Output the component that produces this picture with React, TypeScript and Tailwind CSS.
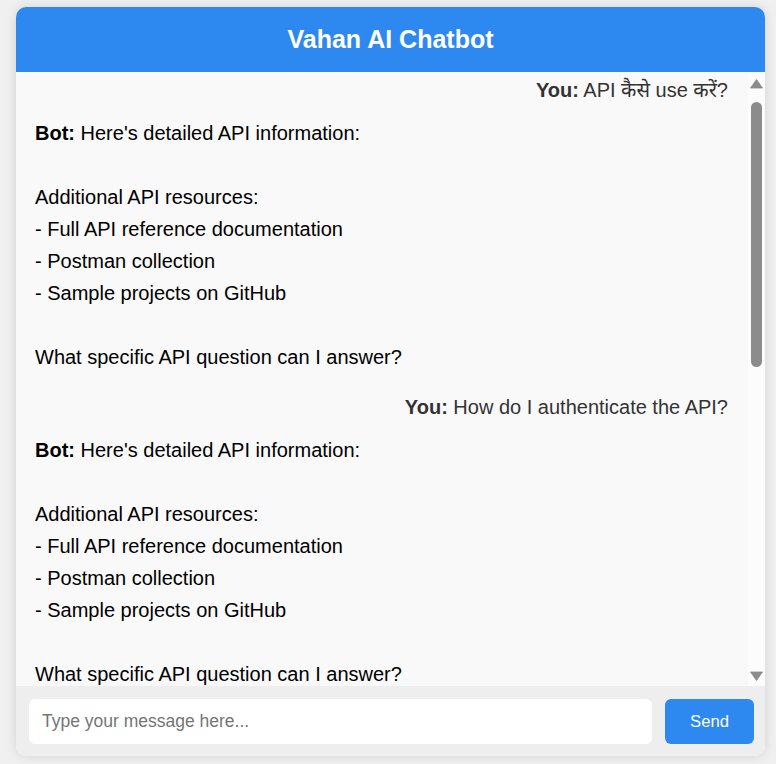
import React, { useEffect, useRef } from "react";

const BOT_TEXT =
  "Here's detailed API information:\n\nAdditional API resources:\n- Full API reference documentation\n- Postman collection\n- Sample projects on GitHub\n\nWhat specific API question can I answer?";

const messages: { from: "user" | "bot"; text: string }[] = [
  { from: "user", text: "API कैसे use करें?" },
  { from: "bot", text: BOT_TEXT },
  { from: "user", text: "How do I authenticate the API?" },
  { from: "bot", text: BOT_TEXT },
  { from: "user", text: "What are the API rate limits?" },
  { from: "bot", text: BOT_TEXT },
  { from: "user", text: "API documentation कहाँ है?" },
  { from: "bot", text: BOT_TEXT },
];

function Scrollbar() {
  return (
    <div className="w-[17px] shrink-0 bg-[#fcfcfc] flex flex-col">
      <svg width="17" height="17" viewBox="0 0 17 17" className="shrink-0">
        <path d="M8.5 7.5 L14.5 16 L2.5 16 Z" fill="#8c8c8c" strokeLinejoin="round" stroke="#8c8c8c" strokeWidth="0.8" />
      </svg>
      <div className="flex-1 min-h-0">
        <div className="mt-[13px] mx-auto w-[11px] h-[265px] rounded-full bg-[#8c8c8c]" />
      </div>
      <svg width="17" height="17" viewBox="0 0 17 17" className="shrink-0">
        <path d="M2.5 3 L14.5 3 L8.5 11.5 Z" fill="#8c8c8c" strokeLinejoin="round" stroke="#8c8c8c" strokeWidth="0.8" />
      </svg>
    </div>
  );
}

export default function App() {
  const ref = useRef<HTMLDivElement>(null);
  useEffect(() => {
    if (ref.current) ref.current.scrollTop = 18;
  }, []);
  return (
    <div
      className="w-[776px] h-[764px] bg-[#f0f0f0] pt-[7px] pl-[16px]"
      style={{ fontFamily: '"Liberation Sans", Arial, "Noto Sans", sans-serif' }}
    >
      <div className="w-[749px] h-[749px] flex flex-col rounded-[10px] overflow-hidden bg-white shadow-[0_0_12px_rgba(0,0,0,0.12)]">
        <div className="h-[65px] shrink-0 bg-[#2d88f0] flex items-center justify-center">
          <h1 className="text-white font-bold text-[25px] leading-none">Vahan AI Chatbot</h1>
        </div>
        <div className="flex-1 min-h-0 flex bg-[#f9f9f9]">
          <div
            ref={ref}
            className="flex-1 min-w-0 overflow-hidden pl-[19px] pr-[20px] py-[20px] text-[20px] leading-[32px]"
          >
            {messages.map((m, i) =>
              m.from === "user" ? (
                <div key={i} className="text-right text-[#333333] mb-[11px]">
                  <span className="font-bold">You:</span> {m.text}
                </div>
              ) : (
                <div key={i} className="text-black whitespace-pre-wrap mb-[18px]">
                  <span className="font-bold">Bot:</span> {m.text}
                </div>
              )
            )}
          </div>
          <Scrollbar />
        </div>
        <div className="h-[70px] shrink-0 bg-[#eeeeee] flex items-center pl-[13px] pr-[11px] gap-[13px]">
          <input
            type="text"
            placeholder="Type your message here..."
            className="flex-1 h-[45px] rounded-[6px] bg-white pl-[13px] text-[17.5px] outline-none placeholder:text-[#757575]"
            style={{ fontFamily: '"Liberation Sans", Arial, sans-serif' }}
          />
          <button
            className="w-[89px] h-[45px] rounded-[6px] bg-[#2d88f0] text-white text-[16.67px]"
            style={{ fontFamily: '"Liberation Sans", Arial, sans-serif' }}
          >
            Send
          </button>
        </div>
      </div>
    </div>
  );
}
